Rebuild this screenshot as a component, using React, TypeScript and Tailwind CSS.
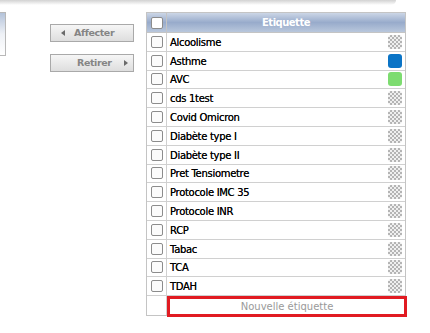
import React from "react";

const rows: { label: string; color?: string }[] = [
  { label: "Alcoolisme" },
  { label: "Asthme", color: "#0b74c6" },
  { label: "AVC", color: "#7ddc70" },
  { label: "cds 1test" },
  { label: "Covid Omicron" },
  { label: "Diabète type I" },
  { label: "Diabète type II" },
  { label: "Pret Tensiometre" },
  { label: "Protocole IMC 35" },
  { label: "Protocole INR" },
  { label: "RCP" },
  { label: "Tabac" },
  { label: "TCA" },
  { label: "TDAH" },
];

function Box({ white }: { white?: boolean }) {
  return (
    <div
      className={`w-[12px] h-[12px] rounded-[2px] border border-[#8c8c8c] ${
        white ? "bg-white" : "bg-[#fbfbfb]"
      }`}
    />
  );
}

function Swatch({ color }: { color?: string }) {
  if (color) {
    return <div className="w-[14px] h-[14px] rounded-[3px]" style={{ background: color }} />;
  }
  return (
    <div className="w-[14px] h-[14px] rounded-[3px] bg-[repeating-conic-gradient(#b4b4b4_0%_25%,#efefef_0%_50%)] bg-[length:4px_4px]" />
  );
}

export default function App() {
  return (
    <div
      className="w-[430px] h-[333px] bg-white relative overflow-hidden"
      style={{ fontFamily: '"DejaVu Sans", Verdana, sans-serif' }}
    >
      <div className="h-[5px] w-[396px] rounded-br-[6px] bg-gradient-to-b from-[#d2d2d2] to-white" />
      <div className="flex items-start mt-[7px]">
        <div className="w-[6px] h-[44px] border border-l-0 border-[#b8b8b8] bg-gradient-to-b from-[#b4c3da] via-[#eef1f6] to-white" />
        <div className="ml-[44px] mt-[12px] flex flex-col gap-[12px]">
          <div className="w-[84px] h-[18px] border border-[#a9a9a9] bg-gradient-to-b from-[#f6f6f6] to-[#dedede] flex items-center text-[9.5px] tracking-[-0.4px] font-bold text-[#858585]">
            <span className="ml-[10px] w-0 h-0 border-y-[3.5px] border-y-transparent border-r-[4px] border-r-[#6a6a6a]" />
            <span className="ml-[9px]">Affecter</span>
          </div>
          <div className="w-[84px] h-[18px] border border-[#a9a9a9] bg-gradient-to-b from-[#f6f6f6] to-[#dedede] flex items-center text-[9.5px] tracking-[-0.4px] font-bold text-[#858585]">
            <span className="ml-[26px]">Retirer</span>
            <span className="ml-[12px] w-0 h-0 border-y-[3.5px] border-y-transparent border-l-[4px] border-l-[#6a6a6a]" />
          </div>
        </div>
        <div className="ml-[12px] w-[260px] border border-[#c4c4c4] text-[10px] tracking-[-0.3px] text-[#000] [text-shadow:0_0_0.4px_#333]">
          <div className="flex h-[20px] border-b border-[#c4c4c4] bg-gradient-to-b from-[#ccd6e6] via-[#98abcb] to-[#b9c7dc]">
            <div className="w-[20px] border-r border-[#c4c4c4] flex items-center justify-center">
              <Box white />
            </div>
            <div className="flex-1 flex items-center justify-center text-white font-bold text-[10px] tracking-[-0.5px] [text-shadow:none]">
              Etiquette
            </div>
          </div>
          {rows.map((r) => (
            <div key={r.label} className="flex h-[18.8px] border-b border-[#d0d0d0]">
              <div className="w-[20px] border-r border-[#d0d0d0] flex items-center justify-center">
                <Box />
              </div>
              <div className="flex-1 flex items-center justify-between pl-[3px] pr-[3px]">
                <span className="pt-[1px]">{r.label}</span>
                <Swatch color={r.color} />
              </div>
            </div>
          ))}
          <div className="flex h-[19px]">
            <div className="w-[20px] border-r border-[#d0d0d0]" />
            <div className="flex-1 -mr-[2px] -mb-[2px] h-[21px] border-[3px] border-[#e11b22] bg-white flex items-center justify-center text-[#9a9a9a] tracking-normal [text-shadow:none]">
              Nouvelle étiquette
            </div>
          </div>
        </div>
      </div>
    </div>
  );
}
